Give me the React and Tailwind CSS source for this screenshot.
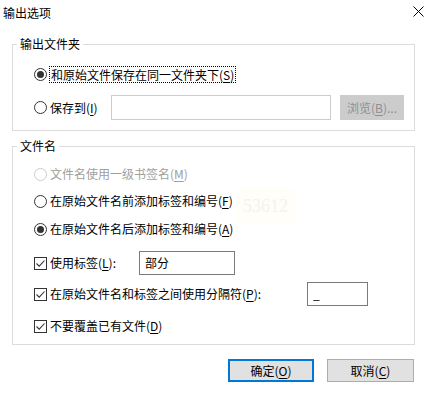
import React from "react";

const FONT = { fontFamily: '"Noto Sans CJK SC", "Microsoft YaHei", sans-serif' };

function Radio({ checked, disabled }) {
  return (
    <span
      className={`relative inline-flex h-[13px] w-[13px] shrink-0 items-center justify-center rounded-full border bg-white ${
        disabled ? "border-[#cccccc]" : "border-[#333333]"
      }`}
    >
      {checked && <span className="h-[7px] w-[7px] rounded-full bg-[#333333]" />}
    </span>
  );
}

function Check() {
  return (
    <span className="inline-flex h-[13px] w-[13px] shrink-0 items-center justify-center border border-[#333333] bg-white">
      <svg width="11" height="11" viewBox="0 0 11 11">
        <path d="M1.5 5.5 L4.2 8.2 L9.5 2.5" fill="none" stroke="#333333" strokeWidth="1.1" />
      </svg>
    </span>
  );
}

function Acc({ children }) {
  return <span className="underline underline-offset-[2px]">{children}</span>;
}

export default function App() {
  return (
    <div
      className="relative h-[401px] w-[432px] overflow-hidden bg-white text-[12px] leading-[16px] text-[#000000]"
      style={FONT}
    >
      {/* title bar */}
      <div className="flex h-[25px] items-center justify-between pl-[3px] pr-[8px]">
        <span className="text-[12px]">输出选项</span>
        <svg width="11" height="11" viewBox="0 0 11 11" className="-mt-[2px]">
          <path d="M0.5 0.5 L10.5 10.5 M10.5 0.5 L0.5 10.5" stroke="#000" strokeWidth="1" fill="none" />
        </svg>
      </div>

      {/* group 1 */}
      <div className="relative ml-[12px] mt-[19px] h-[87px] w-[403px] border border-[#dcdcdc]">
        <span className="absolute left-[4px] top-[-9px] bg-white px-[3px] leading-[16px]">输出文件夹</span>
        <div className="flex flex-col pl-[21px] pt-[19px]">
          <div className="flex h-[20px] items-center">
            <Radio checked />
            <span className="ml-[2px] inline-block border border-dotted border-[#000] px-[1px] leading-[15px]">
              和原始文件保存在同一文件夹下(<Acc>S</Acc>)
            </span>
          </div>
          <div className="mt-[11px] flex h-[25px] items-center">
            <Radio />
            <span className="ml-[3px] w-[61px]">
              保存到(<Acc>I</Acc>)
            </span>
            <div className="h-[25px] w-[220px] border border-[#cccccc] bg-white" />
            <div className="ml-[9px] flex h-[25px] w-[64px] items-center justify-center bg-[#cccccc] text-[#8f8f8f]">
              浏览(<Acc>B</Acc>)...
            </div>
          </div>
        </div>
      </div>

      {/* group 2 */}
      <div className="relative ml-[12px] mt-[15px] h-[199px] w-[403px] border border-[#dcdcdc]">
        <span className="absolute left-[4px] top-[-9px] bg-white px-[3px] leading-[16px]">文件名</span>
        <div className="flex flex-col pl-[21px] pt-[17px]">
          <div className="flex h-[20px] items-center text-[#a0a0a0]">
            <Radio disabled />
            <span className="ml-[3px]">
              文件名使用一级书签名(<Acc>M</Acc>)
            </span>
          </div>
          <div className="mt-[7px] flex h-[20px] items-center">
            <Radio />
            <span className="ml-[3px]">
              在原始文件名前添加标签和编号(<Acc>F</Acc>)
            </span>
          </div>
          <div className="mt-[8px] flex h-[20px] items-center">
            <Radio checked />
            <span className="ml-[3px]">
              在原始文件名后添加标签和编号(<Acc>A</Acc>)
            </span>
          </div>
          <div className="mt-[12px] flex h-[24px] items-center">
            <Check />
            <span className="ml-[3px] w-[89px]">
              使用标签(<Acc>L</Acc>):
            </span>
            <div className="flex h-[24px] w-[96px] items-center border border-[#7a7a7a] bg-white pl-[5px]">部分</div>
          </div>
          <div className="mt-[7px] flex h-[24px] items-center">
            <Check />
            <span className="ml-[3px] w-[257px]">
              在原始文件名和标签之间使用分隔符(<Acc>P</Acc>):
            </span>
            <div className="flex h-[24px] w-[61px] items-center border border-[#7a7a7a] bg-white pl-[5px]">_</div>
          </div>
          <div className="mt-[10px] flex h-[20px] items-center">
            <Check />
            <span className="ml-[3px]">
              不要覆盖已有文件(<Acc>D</Acc>)
            </span>
          </div>
        </div>
      </div>

      {/* buttons */}
      <div className="mt-[14px] flex pl-[228px]">
        <div className="flex h-[23px] w-[86px] items-center justify-center border-2 border-[#0078d7] bg-[#e1e1e1]">
          确定(<Acc>O</Acc>)
        </div>
        <div className="ml-[13px] flex h-[23px] w-[87px] items-center justify-center border border-[#adadad] bg-[#e1e1e1]">
          取消(<Acc>C</Acc>)
        </div>
      </div>

      {/* faint watermark overlay */}
      <div
        className="pointer-events-none absolute left-[236px] top-[187px] flex h-[37px] w-[59px] items-center justify-center bg-[#fffef8] text-[18px] text-[#f5f4ea]"
        style={{ fontFamily: '"Liberation Serif", serif' }}
      >
        53612
      </div>
    </div>
  );
}
